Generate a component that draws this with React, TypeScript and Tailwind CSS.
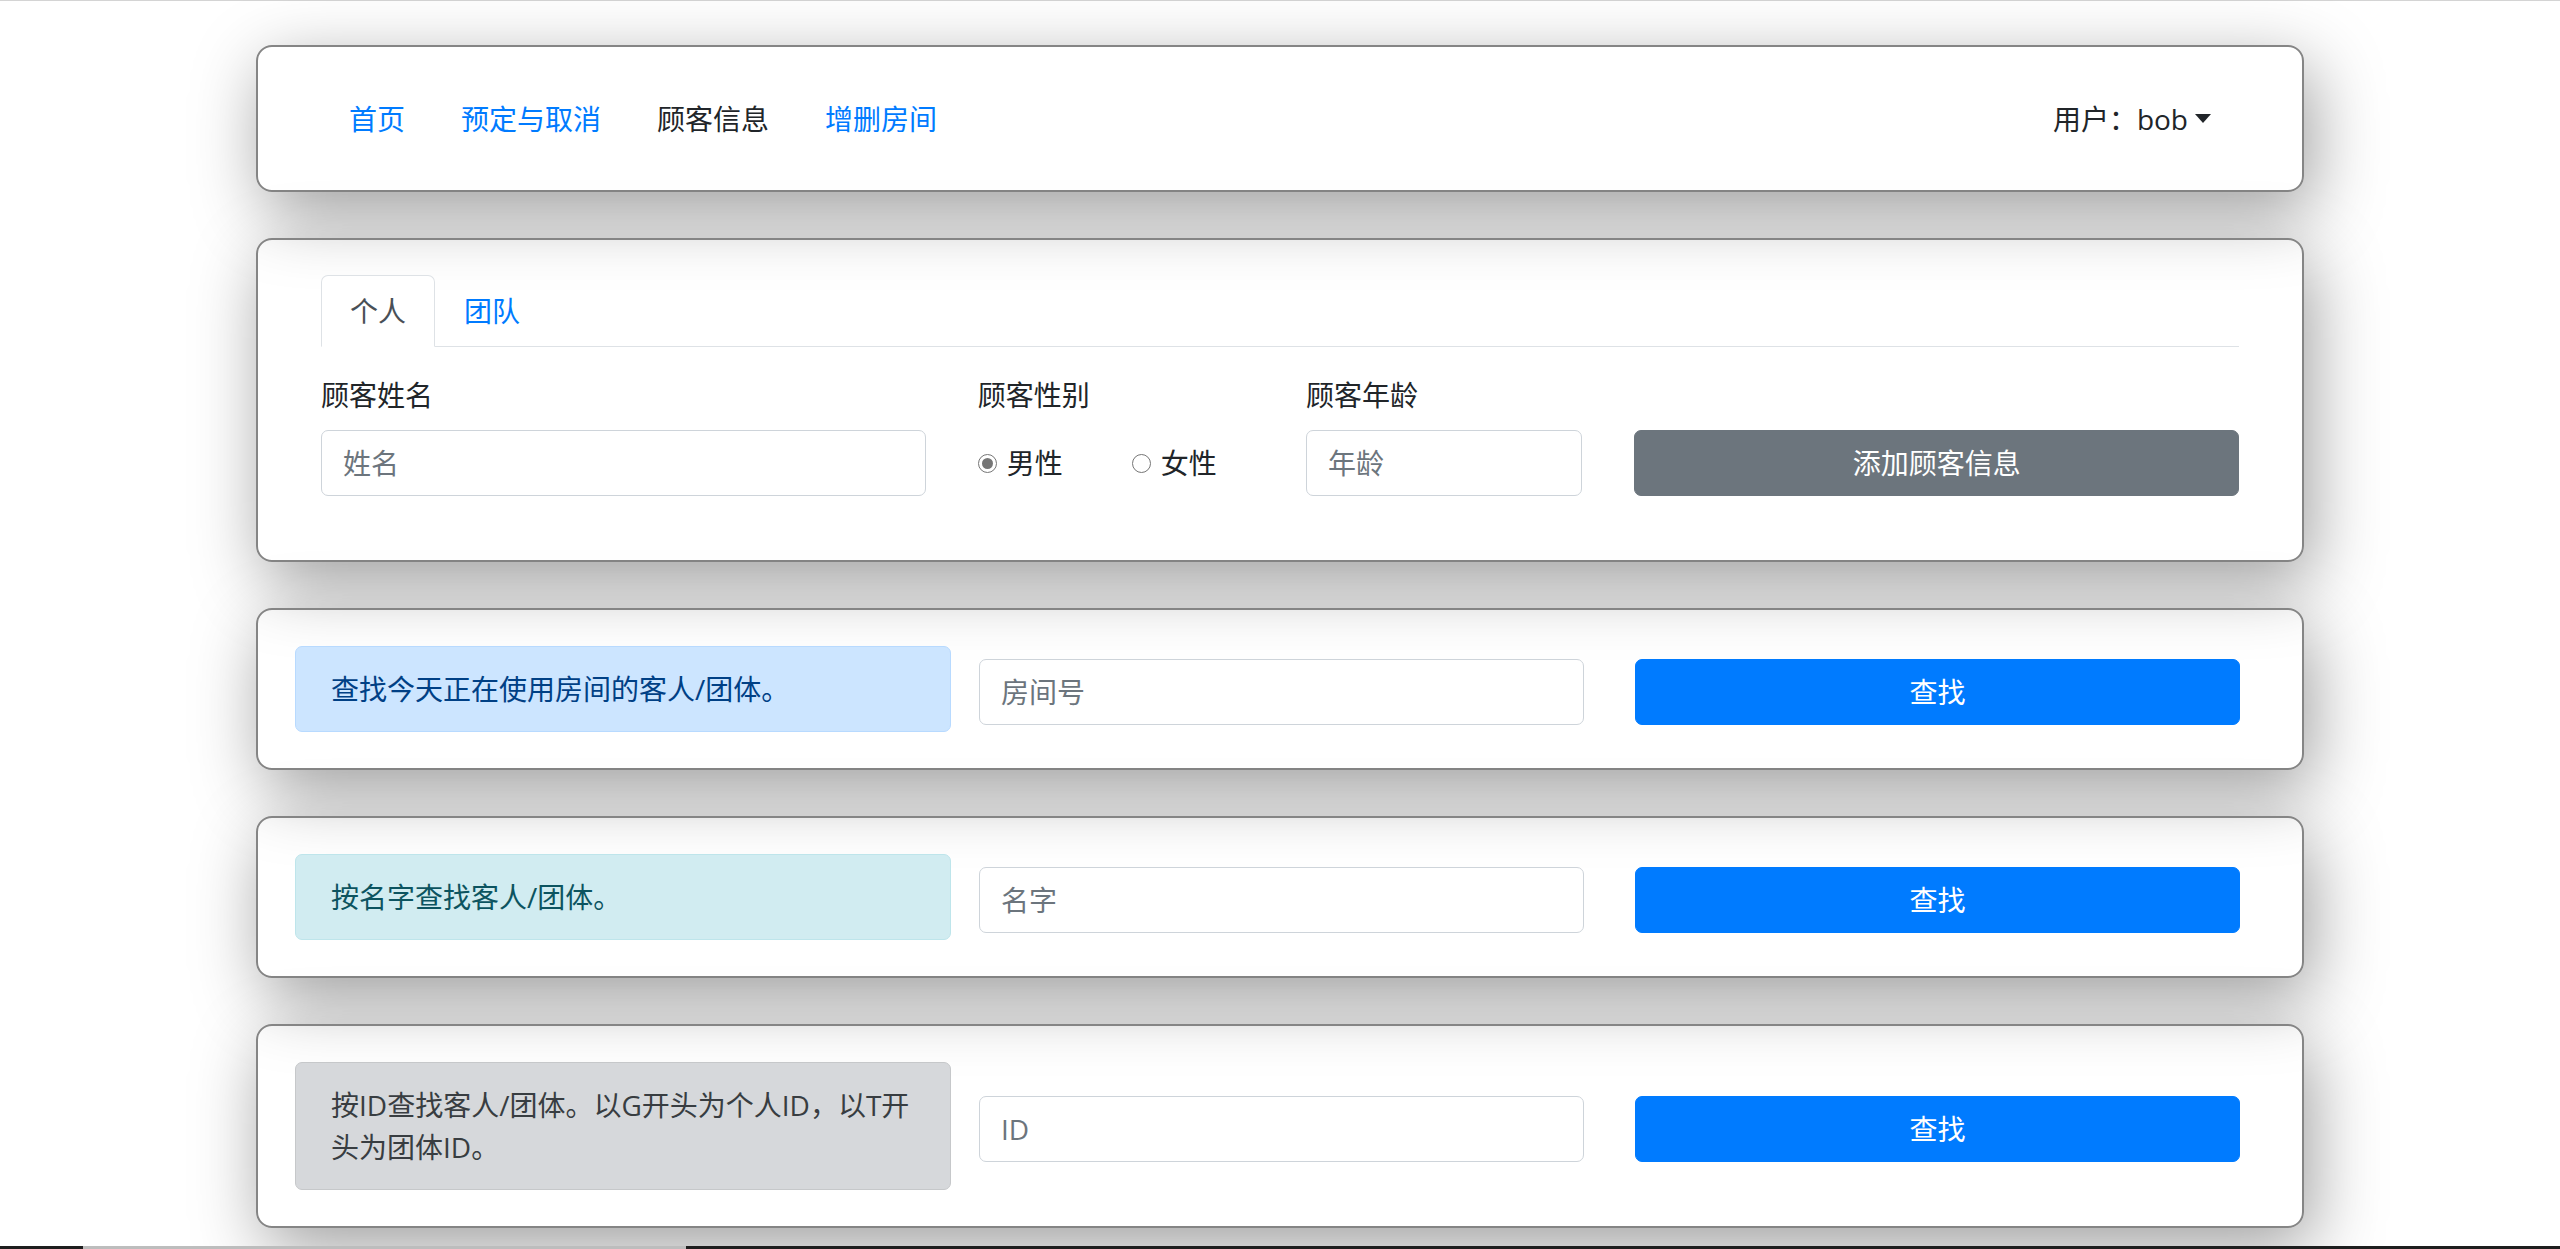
import React from "react";

const card =
  "w-[2048px] mx-auto rounded-[16px] border-2 border-[#858585] bg-transparent shadow-[8px_20px_70px_rgba(0,0,0,0.38)]";

const inputCls =
  "h-[66px] w-full rounded-[7px] border border-[#ced4da] bg-white px-[21px] text-[28px] leading-[42px] text-[#495057] outline-none placeholder:text-[#6c757d]";

function Radio({ checked, label }: { checked: boolean; label: string }) {
  return (
    <label className="flex items-center">
      <span className="flex h-[19px] w-[19px] items-center justify-center rounded-full border border-[#767676] bg-white">
        {checked && <span className="h-[11px] w-[11px] rounded-full bg-[#767676]" />}
      </span>
      <span className="ml-[10px]">{label}</span>
    </label>
  );
}

function SearchCard({
  tone,
  lines,
  placeholder,
}: {
  tone: string;
  lines: string[];
  placeholder: string;
}) {
  return (
    <div className={card}>
      <div className="flex items-center py-[36px] pl-[37px] pr-[62px]">
        <div className={"w-[656px] rounded-[7px] border px-[35px] py-[21px] " + tone}>
          {lines.map((l, i) => (
            <div key={i} className="whitespace-nowrap">
              {l}
            </div>
          ))}
        </div>
        <div className="ml-[28px] mt-[6px] w-[605px]">
          <input className={inputCls} placeholder={placeholder} />
        </div>
        <button className="ml-[51px] mt-[6px] h-[66px] w-[605px] rounded-[7px] border border-[#007bff] bg-[#007bff] text-[28px] leading-[42px] text-white">
          查找
        </button>
      </div>
    </div>
  );
}

export default function App() {
  return (
    <div className="min-h-screen bg-white font-['Open_Sans','Noto_Sans_CJK_SC',sans-serif] text-[28px] leading-[42px] text-[#212529]">
      <div className="h-px bg-[#d4d4d4]" />
      <div className="flex flex-col gap-[46px] pt-[44px]">
        {/* Nav card */}
        <div className={card}>
          <div className="flex h-[143px] items-center justify-between px-[63px]">
            <nav className="flex">
              <a className="px-[28px] py-[14px] text-[#007bff]">首页</a>
              <a className="px-[28px] py-[14px] text-[#007bff]">预定与取消</a>
              <a className="px-[28px] py-[14px] text-[#212529]">顾客信息</a>
              <a className="px-[28px] py-[14px] text-[#007bff]">增删房间</a>
            </nav>
            <div className="flex items-center px-[28px] py-[14px]">
              <span>用户：bob</span>
              <span className="ml-[7px] h-0 w-0 border-x-[8px] border-t-[9px] border-x-transparent border-t-[#212529]" />
            </div>
          </div>
        </div>

        {/* Add customer card */}
        <div className={card}>
          <div className="px-[63px] pb-[64px] pt-[35px]">
            <div className="flex border-b border-[#dee2e6]">
              <div className="-mb-px rounded-t-[7px] border border-[#dee2e6] border-b-white bg-white px-[28px] py-[14px] text-[#495057]">
                个人
              </div>
              <div className="-mb-px border border-transparent px-[28px] py-[14px] text-[#007bff]">
                团队
              </div>
            </div>
            <div className="grid grid-cols-12 gap-x-[52px] pt-[27px]">
              <div className="col-span-4">
                <div className="mb-[14px]">顾客姓名</div>
                <input className={inputCls} placeholder="姓名" />
              </div>
              <div className="col-span-2">
                <div className="mb-[14px]">顾客性别</div>
                <div className="flex h-[66px] items-center">
                  <div className="mr-[69px]">
                    <Radio checked label="男性" />
                  </div>
                  <Radio checked={false} label="女性" />
                </div>
              </div>
              <div className="col-span-2">
                <div className="mb-[14px]">顾客年龄</div>
                <input className={inputCls} placeholder="年龄" />
              </div>
              <div className="col-span-4 self-end">
                <button className="h-[66px] w-full rounded-[7px] border border-[#6c757d] bg-[#6c757d] text-[28px] leading-[42px] text-white">
                  添加顾客信息
                </button>
              </div>
            </div>
          </div>
        </div>

        <SearchCard
          tone="border-[#b8daff] bg-[#cce5ff] text-[#004085]"
          lines={["查找今天正在使用房间的客人/团体。"]}
          placeholder="房间号"
        />
        <SearchCard
          tone="border-[#bee5eb] bg-[#d1ecf1] text-[#0c5460]"
          lines={["按名字查找客人/团体。"]}
          placeholder="名字"
        />
        <SearchCard
          tone="border-[#c6c8ca] bg-[#d6d8db] text-[#383d41]"
          lines={["按ID查找客人/团体。以G开头为个人ID，以T开", "头为团体ID。"]}
          placeholder="ID"
        />
      </div>
      <div className="mt-[18px] flex h-[40px]">
        <div className="w-[83px] bg-[#1e1e1e]" />
        <div className="w-[603px] bg-[#bdbdbd]" />
        <div className="flex-1 bg-[#1e1e1e]" />
      </div>
    </div>
  );
}
